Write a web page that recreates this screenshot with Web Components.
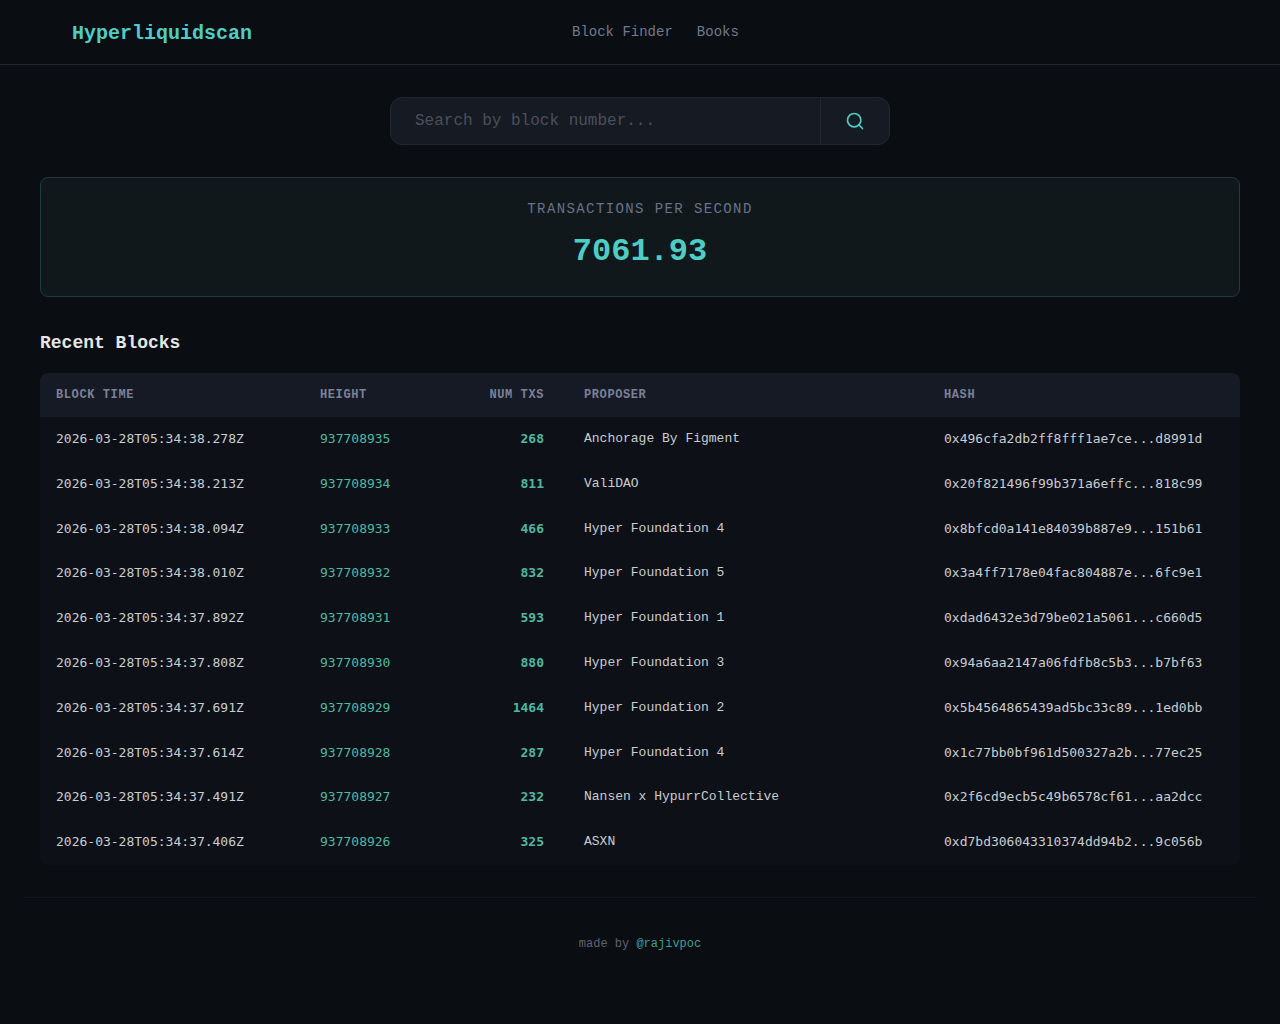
<!DOCTYPE html>
<html>
<head>
<meta charset="utf-8">
<title>Hyperliquidscan</title>
<style>
  html, body { margin: 0; background: #0a0d12; }
  body { font-family: "Liberation Mono", monospace; color: #e0e0e0; min-height: 1024px; }
  main { display: block; padding: 32px 40px 0; }
</style>
</head>
<body>
<hl-header></hl-header>
<main>
  <hl-search></hl-search>
  <hl-tps value="7061.93"></hl-tps>
  <hl-blocks>
    <hl-block-row time="2026-03-28T05:34:38.278Z" height="937708935" txs="268" proposer="Anchorage By Figment" hash="0x496cfa2db2ff8fff1ae7ce...d8991d"></hl-block-row>
    <hl-block-row time="2026-03-28T05:34:38.213Z" height="937708934" txs="811" proposer="ValiDAO" hash="0x20f821496f99b371a6effc...818c99"></hl-block-row>
    <hl-block-row time="2026-03-28T05:34:38.094Z" height="937708933" txs="466" proposer="Hyper Foundation 4" hash="0x8bfcd0a141e84039b887e9...151b61"></hl-block-row>
    <hl-block-row time="2026-03-28T05:34:38.010Z" height="937708932" txs="832" proposer="Hyper Foundation 5" hash="0x3a4ff7178e04fac804887e...6fc9e1"></hl-block-row>
    <hl-block-row time="2026-03-28T05:34:37.892Z" height="937708931" txs="593" proposer="Hyper Foundation 1" hash="0xdad6432e3d79be021a5061...c660d5"></hl-block-row>
    <hl-block-row time="2026-03-28T05:34:37.808Z" height="937708930" txs="880" proposer="Hyper Foundation 3" hash="0x94a6aa2147a06fdfb8c5b3...b7bf63"></hl-block-row>
    <hl-block-row time="2026-03-28T05:34:37.691Z" height="937708929" txs="1464" proposer="Hyper Foundation 2" hash="0x5b4564865439ad5bc33c89...1ed0bb"></hl-block-row>
    <hl-block-row time="2026-03-28T05:34:37.614Z" height="937708928" txs="287" proposer="Hyper Foundation 4" hash="0x1c77bb0bf961d500327a2b...77ec25"></hl-block-row>
    <hl-block-row time="2026-03-28T05:34:37.491Z" height="937708927" txs="232" proposer="Nansen x HypurrCollective" hash="0x2f6cd9ecb5c49b6578cf61...aa2dcc"></hl-block-row>
    <hl-block-row time="2026-03-28T05:34:37.406Z" height="937708926" txs="325" proposer="ASXN" hash="0xd7bd306043310374dd94b2...9c056b"></hl-block-row>
  </hl-blocks>
</main>
<hl-footer></hl-footer>

<script>
  (() => {
    const plex = '"Liberation Mono", monospace';
    const dejavu = '"DejaVu Sans Mono", monospace';
    const columns = '264px 120px 144px 360px 312px';

    class Base extends HTMLElement {
      constructor() {
        super();
        this.attachShadow({mode: 'open'});
      }
    }

    class HlHeader extends Base {
      connectedCallback() {
        this.shadowRoot.innerHTML = `
          <style>
            :host { display: flex; align-items: center; height: 64px; padding-left: 72px; border-bottom: 1px solid #22252b; }
            .logo { font: bold 20px ${plex}; color: #4ecdc4; width: 180px; margin-right: 320px; margin-top: 2px; }
            nav { display: flex; gap: 24px; font: 14px ${plex}; color: #6f7a8c; margin-top: -1px; }
          </style>
          <div class="logo">Hyperliquidscan</div>
          <nav><span>Block Finder</span><span>Books</span></nav>`;
      }
    }

    class HlSearch extends Base {
      connectedCallback() {
        this.shadowRoot.innerHTML = `
          <style>
            :host { display: flex; box-sizing: border-box; width: 500px; height: 48px; margin: 0 auto 32px;
              background: #161a22; border: 1px solid #23262e; border-radius: 12px; }
            .input { flex: 1; padding-left: 24px; font: 16px/46px ${plex}; color: #4b4f5c; }
            button { width: 69px; padding: 0; background: none; border: 0; border-left: 1px solid #23262e;
              display: flex; align-items: center; justify-content: center; }
            svg { display: block; }
          </style>
          <div class="input">Search by block number...</div>
          <button>
            <svg width="20" height="20" viewBox="0 0 24 24" fill="none" stroke="#4ecdc4" stroke-width="2" stroke-linecap="round" stroke-linejoin="round">
              <circle cx="11" cy="11" r="8"></circle><path d="m21 21-4.3-4.3"></path>
            </svg>
          </button>`;
      }
    }

    class HlTps extends Base {
      connectedCallback() {
        this.shadowRoot.innerHTML = `
          <style>
            :host { display: flex; flex-direction: column; align-items: center; box-sizing: border-box; height: 120px;
              padding-top: 21px; margin-bottom: 32px; background: #10181c; border: 1px solid #1f3c3d; border-radius: 8px; }
            .label { font: 14px/20px ${plex}; letter-spacing: 1.4px; color: #6b7189; }
            .value { font: bold 32px/40px ${plex}; color: #4ecdc4; margin-top: 13px; }
          </style>
          <div class="label">TRANSACTIONS PER SECOND</div>
          <div class="value">${this.getAttribute('value')}</div>`;
      }
    }

    class HlBlocks extends Base {
      connectedCallback() {
        this.shadowRoot.innerHTML = `
          <style>
            :host { display: block; }
            h2 { margin: 0 0 16px; font: bold 18px/28px ${plex}; color: #e6e6e6; }
            .table { background: #0d1117; border-radius: 8px; overflow: hidden; }
            .head { display: grid; grid-template-columns: ${columns}; height: 44px; align-items: center; background: #161a24;
              font: bold 12px ${plex}; letter-spacing: .6px; color: #7b8199; }
            .head span { padding-left: 16px; }
            .head .num { padding: 0 24px 0 0; text-align: right; }
          </style>
          <h2>Recent Blocks</h2>
          <div class="table">
            <div class="head">
              <span>BLOCK TIME</span><span>HEIGHT</span><span class="num">NUM TXS</span><span>PROPOSER</span><span>HASH</span>
            </div>
            <slot></slot>
          </div>`;
      }
    }

    class HlBlockRow extends Base {
      connectedCallback() {
        const get = name => this.getAttribute(name);
        this.shadowRoot.innerHTML = `
          <style>
            :host { display: grid; grid-template-columns: ${columns}; padding: 12px 0; font: 13px/20.8px ${dejavu}; color: #c9ccd1; }
            span { padding-left: 16px; white-space: nowrap; }
            .height { color: #4fb8a2; font-weight: 500; }
            .num { padding: 0 24px 0 0; text-align: right; color: #4fb8a2; font-weight: bold; }
            .proposer { font-family: ${plex}; }
          </style>
          <span>${get('time')}</span>
          <span class="height">${get('height')}</span>
          <span class="num">${get('txs')}</span>
          <span class="proposer">${get('proposer')}</span>
          <span>${get('hash')}</span>`;
      }
    }

    class HlFooter extends Base {
      connectedCallback() {
        this.shadowRoot.innerHTML = `
          <style>
            :host { display: block; margin: 32px 24px 0; padding-top: 37px; border-top: 1px solid #14171d;
              text-align: center; font: 12px/19px ${plex}; color: #5d6270; }
            a { color: #3f9d92; text-decoration: none; }
          </style>
          made by <a>@rajivpoc</a>`;
      }
    }

    customElements.define('hl-header', HlHeader);
    customElements.define('hl-search', HlSearch);
    customElements.define('hl-tps', HlTps);
    customElements.define('hl-blocks', HlBlocks);
    customElements.define('hl-block-row', HlBlockRow);
    customElements.define('hl-footer', HlFooter);
  })();
</script>
</body>
</html>
